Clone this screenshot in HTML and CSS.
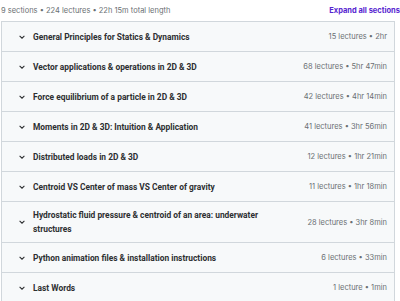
FILE: index.html
```html
<!DOCTYPE html>
<html lang="en">
<head>
    <meta charset="UTF-8">
    <meta name="viewport" content="width=device-width, initial-scale=1.0">
    <title>Course content</title>
    <link rel="stylesheet" href="styles.css">
</head>
<body>

<div class="curriculum">
    <div class="summary">
        <span>9 sections • 224 lectures • 22h 15m total length</span>
        <button class="expand-all">Expand all sections</button>
    </div>

    <div class="sections">
        <div class="section">
            <svg class="chevron" viewBox="0 0 10 10"><path d="M2 3.5 L5 6.5 L8 3.5"/></svg>
            <span class="title">General Principles for Statics &amp; Dynamics</span>
            <span class="meta">15 lectures • 2hr</span>
        </div>
        <div class="section">
            <svg class="chevron" viewBox="0 0 10 10"><path d="M2 3.5 L5 6.5 L8 3.5"/></svg>
            <span class="title">Vector applications &amp; operations in 2D &amp; 3D</span>
            <span class="meta">68 lectures • 5hr 47min</span>
        </div>
        <div class="section">
            <svg class="chevron" viewBox="0 0 10 10"><path d="M2 3.5 L5 6.5 L8 3.5"/></svg>
            <span class="title">Force equilibrium of a particle in 2D &amp; 3D</span>
            <span class="meta">42 lectures • 4hr 14min</span>
        </div>
        <div class="section">
            <svg class="chevron" viewBox="0 0 10 10"><path d="M2 3.5 L5 6.5 L8 3.5"/></svg>
            <span class="title">Moments in 2D &amp; 3D: Intuition &amp; Application</span>
            <span class="meta">41 lectures • 3hr 56min</span>
        </div>
        <div class="section">
            <svg class="chevron" viewBox="0 0 10 10"><path d="M2 3.5 L5 6.5 L8 3.5"/></svg>
            <span class="title">Distributed loads in 2D &amp; 3D</span>
            <span class="meta">12 lectures • 1hr 21min</span>
        </div>
        <div class="section">
            <svg class="chevron" viewBox="0 0 10 10"><path d="M2 3.5 L5 6.5 L8 3.5"/></svg>
            <span class="title">Centroid VS Center of mass VS Center of gravity</span>
            <span class="meta">11 lectures • 1hr 18min</span>
        </div>
        <div class="section">
            <svg class="chevron" viewBox="0 0 10 10"><path d="M2 3.5 L5 6.5 L8 3.5"/></svg>
            <span class="title">Hydrostatic fluid pressure &amp; centroid of an area: underwater structures</span>
            <span class="meta">28 lectures • 3hr 8min</span>
        </div>
        <div class="section">
            <svg class="chevron" viewBox="0 0 10 10"><path d="M2 3.5 L5 6.5 L8 3.5"/></svg>
            <span class="title">Python animation files &amp; installation instructions</span>
            <span class="meta">6 lectures • 33min</span>
        </div>
        <div class="section">
            <svg class="chevron" viewBox="0 0 10 10"><path d="M2 3.5 L5 6.5 L8 3.5"/></svg>
            <span class="title">Last Words</span>
            <span class="meta">1 lecture • 1min</span>
        </div>
    </div>
</div>

</body>
</html>
```

FILE: styles.css
```css
body {
    font-family: Inter, "Noto Sans", sans-serif;
    margin: 0;
    padding: 0;
    background-color: #fff;
    color: #2d2f31;
}
.curriculum {
    width: 400px;
}
.summary {
    display: flex;
    justify-content: space-between;
    align-items: center;
    height: 21px;
    padding-left: 1px;
    font-size: 7.5px;
    color: #6a6f73;
}
.expand-all {
    padding: 0;
    border: none;
    background: none;
    font-family: inherit;
    font-size: 7.5px;
    font-weight: 700;
    color: #5624d0;
    cursor: pointer;
}
.sections {
    width: 392px;
    margin-left: 1px;
    border: 1px solid #d1d7dc;
    border-bottom: none;
}
.section {
    display: flex;
    align-items: center;
    min-height: 30px;
    padding: 6px 7px 6px 16px;
    box-sizing: border-box;
    background-color: #f7f9fa;
    border-bottom: 1px solid #d1d7dc;
}
.chevron {
    flex: none;
    width: 8px;
    height: 8px;
    margin-right: 7px;
    fill: none;
    stroke: #2d2f31;
    stroke-width: 1.3;
}
.title {
    flex: 1;
    font-family: Roboto, sans-serif;
    font-size: 8.4px;
    font-weight: 700;
    line-height: 14px;
    padding-right: 16px;
}
.meta {
    flex: none;
    font-size: 7.5px;
    color: #6a6f73;
}
```
